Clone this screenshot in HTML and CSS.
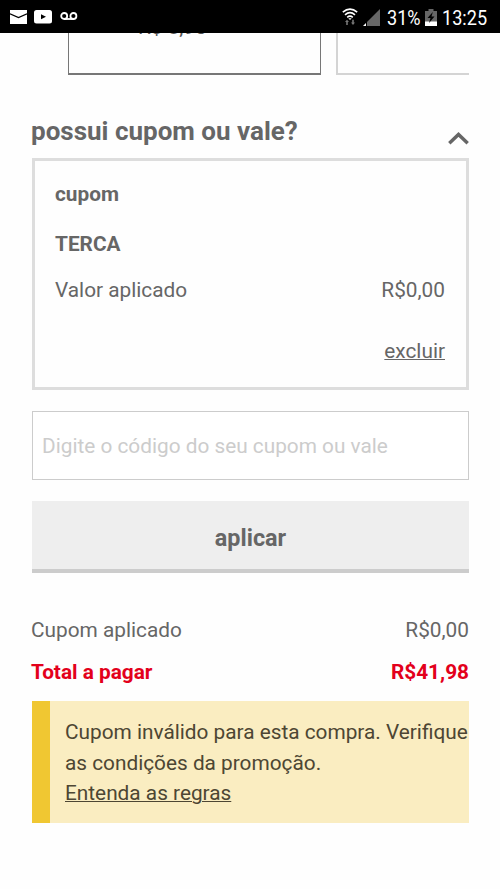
FILE: index.html
```html
<!DOCTYPE html>
<html lang="pt-BR">
<head>
<meta charset="utf-8">
<title>Cupom ou vale</title>
<link rel="stylesheet" href="styles.css">
</head>
<body>
<header class="status">
  <div class="status-left">
    <svg width="17" height="14" viewBox="0 0 17 14"><path fill="#fff" d="M0 0H17V14H0Z"/><path fill="none" stroke="#000" stroke-width="1.2" d="M0 3.8L8.5 7.5L17 3.8"/></svg>
    <svg class="video" width="18" height="14" viewBox="0 0 18 14"><rect width="18" height="13.5" rx="2.5" fill="#fff"/><path d="M7 4.2L12 6.8L7 9.3Z"/></svg>
    <svg class="voicemail" width="18" height="10" viewBox="0 0 18 10"><g fill="none" stroke="#fff" stroke-width="1.8"><circle cx="4.2" cy="4" r="3"/><circle cx="13.4" cy="4" r="3"/><path d="M4 7H14"/></g></svg>
  </div>
  <div class="status-right">
    <svg class="wifi" width="16" height="18" viewBox="0 0 16 18"><g fill="none" stroke="#fff" stroke-width="1.6"><path d="M.8 4.2Q8-2 15.2 4.2M3 6.9Q8 2.5 13 6.9M5.2 9.3Q8 7 10.8 9.3"/></g><path fill="#fff" d="M6.3 10.2H9.7L8 12Z"/><path fill="#777" d="M3 14L5 11.8L7 14H5.8V17H4.2V14ZM9 14.5H10.2V11.8H11.8V14.5H13L11 17Z"/></svg>
    <svg class="signal" width="17" height="17" viewBox="0 0 17 17"><path fill="#666" d="M17 0V17H4V13Z"/><path fill="#fff" d="M0 17L3 14V17Z"/></svg>
    <span class="battery-text">31%</span>
    <svg class="battery" width="12" height="17" viewBox="0 0 12 17"><path fill="#666" d="M0 2H3.5V0H8.5V2H12V17H0Z"/><path fill="#fff" d="M0 12.5H12V17H0Z"/><path d="M7.8 3L2.5 9H5.5L4 14L9.5 7.5H6.5Z"/></svg>
    <span class="clock">13:25</span>
  </div>
</header>
<main>
  <div class="options">
    <div class="option selected"><span class="price">R$ 8,90</span></div>
    <div class="option"></div>
  </div>
  <div class="heading">
    <h2>possui cupom ou vale?</h2>
    <svg width="21" height="13" viewBox="0 0 21 13"><path fill="none" stroke="#666" stroke-width="3.4" d="M1.3 11.2L10.5 2.4L19.7 11.2"/></svg>
  </div>
  <section class="coupon">
    <strong class="label">cupom</strong>
    <strong class="code">TERCA</strong>
    <div class="row value"><span>Valor aplicado</span><span>R$0,00</span></div>
    <a class="remove">excluir</a>
  </section>
  <input class="field" placeholder="Digite o código do seu cupom ou vale">
  <button class="apply">aplicar</button>
  <div class="row applied"><span>Cupom aplicado</span><span>R$0,00</span></div>
  <div class="row total"><span>Total a pagar</span><span>R$41,98</span></div>
  <div class="notice">
    <p>Cupom inválido para esta compra. Verifique<br>as condições da promoção.<br><a>Entenda as regras</a></p>
  </div>
</main>
</body>
</html>
```
FILE: styles.css
```css
* { box-sizing: border-box; }
body { margin: 0; height: 889px; overflow: hidden; background: #fefefe; color: #666; font: 20.8px/30px Roboto, sans-serif; }
.status { height: 33px; background: #000; color: #fff; display: flex; justify-content: space-between; padding: 0 12px 0 10px; }
.status svg { display: block; flex: none; }
.status-left { display: flex; align-items: flex-start; padding-top: 10px; }
.video { margin-left: 7px; }
.voicemail { margin: 2px 0 0 8px; }
.status-right { display: flex; align-items: flex-start; padding-top: 8px; }
.signal { margin: 1px 0 0 5px; }
.battery { margin: 1px 0 0 5px; }
.battery-text, .clock { font-size: 20.8px; line-height: 20px; white-space: nowrap; transform: scaleX(.87); transform-origin: left; }
.battery-text { width: 33px; margin-left: 7px; }
.clock { width: 46px; margin-left: 5px; }
main { width: 437px; margin-left: 32px; }
.options { height: 42px; padding-left: 36px; display: flex; gap: 15px; overflow: hidden; }
.option { flex: none; width: 253px; border: solid #d4d4d4; border-width: 0 2px 2px; }
.selected { border-color: #777; border-width: 0 1.5px 2px; color: #555; }
.price { display: block; margin: -21px 0 0 69px; }
.heading { height: 83px; display: flex; justify-content: space-between; }
.heading h2 { margin: 41px 0 0 -1px; font-size: 26px; line-height: 30px; font-weight: 700; }
.heading svg { margin-top: 57px; }
.coupon { height: 232px; border: 3px solid #ddd; padding: 18px 21px 0 20px; display: flex; flex-direction: column; }
.code { margin-top: 20px; }
.row { display: flex; justify-content: space-between; }
.value { margin-top: 16px; }
.remove { align-self: flex-end; margin-top: 31px; text-decoration: underline; text-decoration-thickness: 1px; }
.field { display: block; width: 437px; height: 69px; margin: 21px 0; border: 1px solid #ccc; border-radius: 0; padding: 0 9px; background: #fff; font: inherit; }
.field::placeholder { color: #ccc; opacity: 1; }
.apply { display: block; width: 437px; height: 72px; border: 0; border-bottom: 4px solid #ccc; background: #eee; color: #666; font: 700 23.4px/30px Roboto, sans-serif; padding: 5px 0 0; }
.applied { margin-top: 42px; }
.total { margin-top: 12px; color: #e3001b; font-weight: 700; }
.applied, .total { margin-left: -1px; }
.notice { height: 122px; margin-top: 14px; border-left: 18px solid #f0c732; background: #faedc1; color: #4d4633; padding: 16px 0 0 15px; }
.notice p { margin: 0; line-height: 30.5px; white-space: nowrap; }
.notice a { text-decoration: underline; text-decoration-thickness: 1px; }
```
